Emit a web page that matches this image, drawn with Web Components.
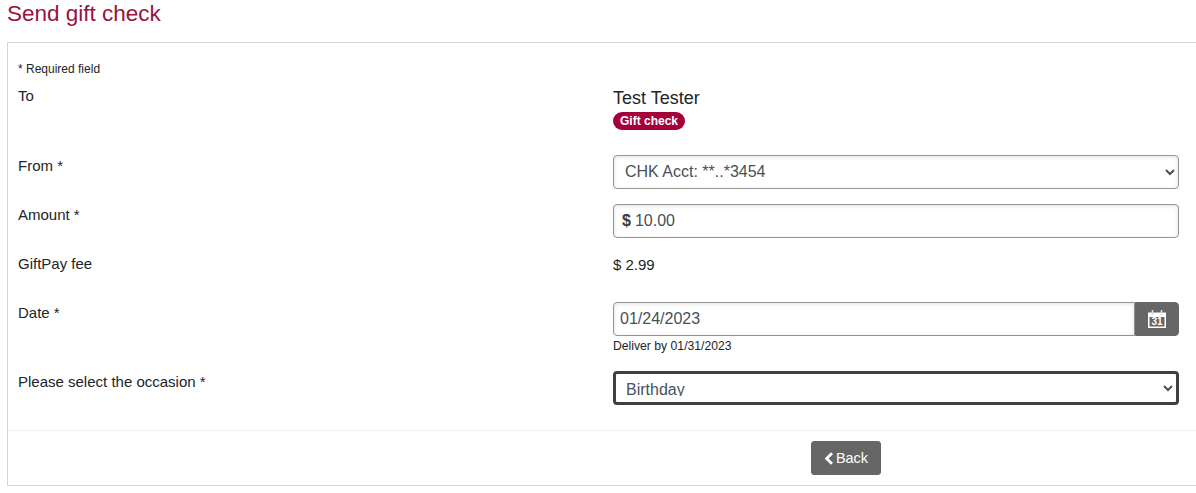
<!DOCTYPE html>
<html>
<head>
<meta charset="utf-8">
<title>Send gift check</title>
<style>
  html, body { margin: 0; padding: 0; background: #fff; }
  body { font-family: "Liberation Sans", Arial, sans-serif; color: #212529; overflow: hidden; }
</style>
</head>
<body>
<gift-page>
  <form-row label="To" style="--row-top:8px; --row-height:70px">
    <div style="font-size:18px;line-height:22px;margin-top:2px">Test Tester</div>
    <gift-badge>Gift check</gift-badge>
  </form-row>
  <form-row label="From *" style="--row-height:49px">
    <select-box value="CHK Acct: **..*3454"></select-box>
  </form-row>
  <form-row label="Amount *" style="--row-height:49px">
    <amount-input value="10.00"></amount-input>
  </form-row>
  <form-row label="GiftPay fee" style="--row-height:49px">
    <div style="font-size:15px;line-height:20px;padding-top:2px">$ 2.99</div>
  </form-row>
  <form-row label="Date *" style="--row-height:69px">
    <date-input value="01/24/2023" hint="Deliver by 01/31/2023"></date-input>
  </form-row>
  <form-row label="Please select the occasion *" style="--row-height:59px">
    <select-box value="Birthday" focused></select-box>
  </form-row>
</gift-page>

<script>
class GiftPage extends HTMLElement {
  constructor() {
    super();
    this.attachShadow({ mode: 'open' }).innerHTML = `
    <style>
      :host { display: block; height: 493px; box-sizing: border-box; }
      h1 {
        margin: 0;
        box-sizing: border-box;
        height: 42px;
        padding: 1px 0 0 7px;
        font-size: 22.5px;
        line-height: 26px;
        font-weight: 400;
        color: #98133f;
      }
      .card {
        margin-left: 7px;
        height: 444px;
        box-sizing: border-box;
        border: 1px solid #d5d5d5;
        border-right: 0;
        display: flex;
        flex-direction: column;
      }
      .body { flex: 1; padding: 18px 17px 0 10px; }
      .req { font-size: 12px; line-height: 16px; color: #212529; }
      .foot {
        box-sizing: border-box;
        height: 55px;
        border-top: 1px solid #f1f1f1;
        padding: 10px 0 0 803px;
      }
      button {
        display: flex;
        align-items: center;
        justify-content: center;
        gap: 2px;
        width: 70px;
        height: 34px;
        padding: 0;
        border: 1px solid #666;
        border-radius: 3px;
        background: #666;
        color: #fff;
        font: 14.5px "Liberation Sans", Arial, sans-serif;
      }
      svg { display: block; }
    </style>
    <h1>Send gift check</h1>
    <div class="card">
      <div class="body">
        <div class="req">* Required field</div>
        <slot></slot>
      </div>
      <div class="foot">
        <button type="button">
          <svg width="10" height="13" viewBox="0 0 10 13"><path d="M8 1.2 2.6 6.5 8 11.8" fill="none" stroke="#fff" stroke-width="2.8"/></svg>
          <span>Back</span>
        </button>
      </div>
    </div>`;
  }
}

class FormRow extends HTMLElement {
  constructor() {
    super();
    this.attachShadow({ mode: 'open' }).innerHTML = `
    <style>
      :host {
        display: grid;
        grid-template-columns: 595px 1fr;
        height: var(--row-height, 49px);
        margin-top: var(--row-top, 0);
        font-size: 15px;
        color: #212529;
      }
      .label { line-height: 20px; padding-top: 1px; }
    </style>
    <div class="label"></div>
    <div class="field"><slot></slot></div>`;
    this.shadowRoot.querySelector('.label').textContent = this.getAttribute('label');
  }
}

class GiftBadge extends HTMLElement {
  constructor() {
    super();
    this.attachShadow({ mode: 'open' }).innerHTML = `
    <style>
      :host {
        display: inline-block;
        height: 18px;
        margin-top: 3px;
        padding: 0 7px;
        border-radius: 9px;
        background: #a5003a;
        color: #fff;
        font-size: 12px;
        font-weight: 700;
        line-height: 18px;
      }
    </style>
    <slot></slot>`;
  }
}

class SelectBox extends HTMLElement {
  constructor() {
    super();
    const focused = this.hasAttribute('focused');
    this.attachShadow({ mode: 'open' }).innerHTML = `
    <style>
      :host { display: block; }
      select {
        display: block;
        width: 100%;
        height: 34px;
        box-sizing: border-box;
        padding: 5px 7px 7px;
        border: 1px solid #949494;
        border-radius: 4px;
        background: #fff;
        box-shadow: inset 0 1px 4px rgba(0,0,0,.12);
        color: #495057;
        font: 16px "Liberation Sans", Arial, sans-serif;
        outline: none;
      }
      select.focused {
        border: 3px solid #3f3f3f;
        padding: 6px 6px;
        box-shadow: none;
      }
    </style>
    <select class="${focused ? 'focused' : ''}"><option></option></select>`;
    this.shadowRoot.querySelector('option').textContent = this.getAttribute('value');
  }
}

class AmountInput extends HTMLElement {
  constructor() {
    super();
    this.attachShadow({ mode: 'open' }).innerHTML = `
    <style>
      :host {
        display: flex;
        align-items: center;
        gap: 4px;
        height: 34px;
        box-sizing: border-box;
        padding-left: 8px;
        border: 1px solid #949494;
        border-radius: 4px;
        box-shadow: inset 0 1px 4px rgba(0,0,0,.12);
        color: #495057;
        font-size: 16px;
      }
      b { color: #3a3a3a; }
      input {
        flex: 1;
        min-width: 0;
        border: 0;
        padding: 0;
        background: none;
        color: inherit;
        font: inherit;
        outline: none;
      }
    </style>
    <b>$</b><input type="text">`;
    this.shadowRoot.querySelector('input').value = this.getAttribute('value');
  }
}

class DateInput extends HTMLElement {
  constructor() {
    super();
    this.attachShadow({ mode: 'open' }).innerHTML = `
    <style>
      :host { display: block; }
      .wrap { display: flex; height: 34px; }
      input {
        flex: 1;
        min-width: 0;
        box-sizing: border-box;
        padding: 0 6px;
        border: 1px solid #949494;
        border-radius: 4px 0 0 4px;
        box-shadow: inset 0 1px 4px rgba(0,0,0,.12);
        color: #495057;
        font: 16px "Liberation Sans", Arial, sans-serif;
        outline: none;
      }
      button {
        display: flex;
        align-items: center;
        justify-content: center;
        width: 44px;
        padding: 0;
        border: 1px solid #666;
        border-radius: 0 4px 4px 0;
        background: #666;
      }
      .hint { font-size: 12.2px; line-height: 14px; margin-top: 3px; color: #212529; }
      text { font: 700 10px "Liberation Sans", Arial, sans-serif; }
    </style>
    <div class="wrap">
      <input type="text">
      <button type="button" aria-label="Open calendar">
        <svg width="20" height="20" viewBox="0 0 20 20">
          <path d="M1 3.5h18V19H1z" fill="#fff"/>
          <path d="M2.5 8h15v9.5h-15z" fill="#666"/>
          <path d="M5.5 1v5M14.5 1v5" stroke="#ddd" stroke-width="1.6"/>
          <text x="10" y="16.4" text-anchor="middle" fill="#fff">31</text>
        </svg>
      </button>
    </div>
    <div class="hint"></div>`;
    this.shadowRoot.querySelector('input').value = this.getAttribute('value');
    this.shadowRoot.querySelector('.hint').textContent = this.getAttribute('hint');
  }
}

customElements.define('gift-page', GiftPage);
customElements.define('form-row', FormRow);
customElements.define('gift-badge', GiftBadge);
customElements.define('select-box', SelectBox);
customElements.define('amount-input', AmountInput);
customElements.define('date-input', DateInput);
</script>
</body>
</html>
